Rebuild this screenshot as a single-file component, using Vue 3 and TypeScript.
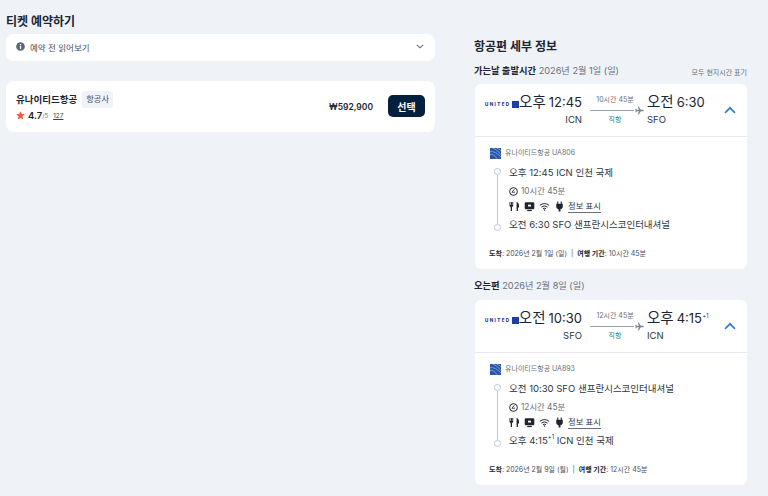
<script setup lang="ts">
interface Leg {
  head: string; date: string; dep: string; depTime: string; arr: string; arrTime: string; plus: boolean;
  from: string; to: string; dur: string; flight: string; depLine: string; arrLine: string; arrive: string;
}
const legs: Leg[] = [
  { head: '가는날 출발시간', date: '2026년 2월 1일 (일)', dep: '오후', depTime: '12:45', arr: '오전', arrTime: '6:30', plus: false,
    from: 'ICN', to: 'SFO', dur: '10시간 45분', flight: 'UA806', depLine: '오후 12:45 ICN 인천 국제', arrLine: '오전 6:30 SFO 샌프란시스코인터내셔널', arrive: '2026년 2월 1일 (일)' },
  { head: '오는편', date: '2026년 2월 8일 (일)', dep: '오전', depTime: '10:30', arr: '오후', arrTime: '4:15', plus: true,
    from: 'SFO', to: 'ICN', dur: '12시간 45분', flight: 'UA893', depLine: '오전 10:30 SFO 샌프란시스코인터내셔널', arrLine: '오후 4:15', arrive: '2026년 2월 9일 (월)' },
]
</script>

<template>
  <div class="page">
    <section class="left">
      <h1 class="title">티켓 예약하기</h1>
      <div class="notice">
        <svg class="info" viewBox="0 0 10 10"><circle cx="5" cy="5" r="4.8" fill="#5f6672"/><rect x="4.3" y="4.3" width="1.4" height="3.4" fill="#fff"/><rect x="4.3" y="2.3" width="1.4" height="1.3" fill="#fff"/></svg>
        <span class="notice-text">예약 전 읽어보기</span>
        <svg class="chev" viewBox="0 0 10 6"><path d="M1 1l4 3.6L9 1" fill="none" stroke="#5f6672" stroke-width="1.3"/></svg>
      </div>
      <div class="offer">
        <div class="offer-info">
          <div class="offer-name"><strong>유나이티드항공</strong><span class="tag">항공사</span></div>
          <div class="rating">
            <svg class="star" viewBox="0 0 10 10"><path d="M5 .3l1.450 3 3.300.4-2.450 2.250.65 3.300L5 7.650 2.050 9.250l.65-3.300L.25 3.700l3.300-.4z" fill="#f4583f"/></svg>
            <b>4.7</b><span class="of">/5</span><u>127</u>
          </div>
        </div>
        <span class="price">₩592,900</span>
        <button class="select">선택</button>
      </div>
    </section>

    <section class="right">
      <h2 class="title details">항공편 세부 정보</h2>
      <template v-for="(leg, i) in legs" :key="leg.flight">
        <div class="leg-head">
          <span class="leg-title"><b>{{ leg.head }}</b> {{ leg.date }}</span>
          <span v-if="i === 0" class="local">모두 현지시간 표기</span>
        </div>
        <article class="card">
          <header class="card-top">
            <div class="logo"><span class="logo-word">UNITED</span><span class="logo-box"></span></div>
            <div class="end dep">
              <div class="time"><span class="ampm">{{ leg.dep }}</span><span>{{ leg.depTime }}</span></div>
              <div class="code">{{ leg.from }}</div>
            </div>
            <div class="route">
              <span class="dur">{{ leg.dur }}</span>
              <div class="line"><i></i>
                <svg class="plane" viewBox="0 0 10 10"><path d="M9.800 5c0-.5-.6-.8-1.200-.8H6.500L4.300.6H3.200l1.100 3.600H2.100L1.200 3H.3l.5 2-.5 2h.9l.9-1.200h2.200L3.200 9.400h1.100l2.200-3.600h2.100c.6 0 1.200-.3 1.200-.8z" fill="#7d8794"/></svg>
              </div>
              <span class="direct">직항</span>
            </div>
            <div class="end arr">
              <div class="time"><span class="ampm">{{ leg.arr }}</span><span>{{ leg.arrTime }}<sup v-if="leg.plus">+1</sup></span></div>
              <div class="code">{{ leg.to }}</div>
            </div>
            <svg class="up" viewBox="0 0 12 8"><path d="M1 6.800l5-5 5 5" fill="none" stroke="#2f80e6" stroke-width="1.700"/></svg>
          </header>
          <div class="card-body">
            <div class="carrier">
              <svg class="globe" viewBox="0 0 12 12"><rect width="12" height="12" fill="#2c56a8"/><path d="M0 4q6-1 12 6M0 7q4-1 8 5M3 0q5 2 9 7M7 0q3 1 5 3" fill="none" stroke="#a9c0e6" stroke-width=".7"/></svg>
              <span>유나이티드항공 {{ leg.flight }}</span>
            </div>
            <div class="stops">
              <div class="rail"><i></i><em></em><i></i></div>
              <div class="stop-text">
                <div class="stop">{{ leg.depLine }}</div>
                <div class="elapsed">
                  <svg class="clock" viewBox="0 0 10 10"><circle cx="5" cy="5" r="4.200" fill="none" stroke="#3c434e" stroke-width="1.200"/><path d="M5.800 2.600 3.300 5.800h3.300" fill="none" stroke="#3c434e" stroke-width="1.100"/></svg>
                  {{ leg.dur }}
                </div>
                <div class="amenities">
                  <svg viewBox="0 0 11 11"><path d="M.5 1v3.600c0 .8.5 1.300 1.200 1.500V10h1.300V6.100c.7-.2 1.200-.7 1.200-1.500V1h-.9v3H3V1h-.9v3h-.7V1zM7.600 1C9.200 1.300 10 2.800 10 4.800v1.700H9V10H7.600z" fill="#1e2530"/></svg>
                  <svg viewBox="0 0 11 11"><rect x=".7" y="1.300" width="9.600" height="7" rx="1.200" fill="#1e2530"/><rect x="4" y="3.700" width="3" height="1.800" fill="#fff"/><rect x="3.200" y="8.900" width="4.600" height="1.200" fill="#1e2530"/></svg>
                  <svg viewBox="0 0 11 11"><path d="M.8 4.300q4.700-3.400 9.400 0M2.500 6q3-2.100 6 0M4.100 7.600q1.400-.9 2.800 0" fill="none" stroke="#1e2530" stroke-width="1"/><circle cx="5.500" cy="9" r=".8" fill="#1e2530"/></svg>
                  <svg viewBox="0 0 11 11"><path d="M3.200.5h1.100v2.300h2.400V.5h1.100v2.300h1v2.700c0 1.500-1 2.500-2.400 2.700v2.300H4.600V8.200C3.200 8 2.200 7 2.200 5.500V2.800h1z" fill="#1e2530"/></svg>
                  <span class="more">정보 표시</span>
                </div>
                <div class="stop">{{ leg.arrLine }}<template v-if="leg.plus"><sup>+1</sup> ICN 인천 국제</template></div>
              </div>
            </div>
            <div class="summary"><b>도착</b>: {{ leg.arrive }} &nbsp;|&nbsp; <b>여행 기간</b>: {{ leg.dur }}</div>
          </div>
        </article>
      </template>
    </section>
  </div>
</template>

<style>
html, body { margin: 0; background: #eff2f7; }
</style>

<style scoped>
.page {
  width: 768px; height: 496px; box-sizing: border-box; overflow: hidden;
  display: flex; align-items: flex-start; padding: 0 21px 0 6px;
  background: #eff2f7; color: #1e2530;
  font-family: Inter, "Noto Sans CJK KR", sans-serif;
}
.left { width: 429px; margin-right: 40px; padding-top: 14px; }
.right { flex: 1; padding-top: 39px; }
.title { margin: 0; font-size: 12px; line-height: 16px; font-weight: 700; color: #1e2530; }
.details { margin-left: -1px; }
.notice {
  margin-top: 4px; height: 27px; background: #fff; border-radius: 7px;
  display: flex; align-items: center; padding: 0 10px 2px; box-sizing: border-box;
}
.info { width: 9px; height: 9px; margin-right: 5px; }
.notice-text { font-size: 8.500px; color: #49505b; }
.chev { width: 8px; height: 5px; margin-left: auto; margin-right: 1px; }
.offer {
  margin-top: 20px; height: 51px; box-sizing: border-box; background: #fff; border-radius: 8px;
  display: flex; align-items: center; padding: 0 10px;
}
.offer-info { flex: 1; }
.offer-name { display: flex; align-items: center; gap: 5px; font-size: 9.500px; line-height: 17px; }
.offer-name strong { font-weight: 600; }
.tag { background: #eff2f7; border-radius: 3px; padding: 0 4px; font-size: 8.300px; color: #49505b; }
.rating { display: flex; align-items: center; font-size: 9.500px; line-height: 14px; margin-top: 1px; }
.star { width: 9px; height: 9px; margin-right: 3px; }
.rating b { font-weight: 600; }
.of { font-size: 6px; color: #6a717c; margin-right: 5px; }
.rating u { font-size: 6.500px; color: #3c434e; }
.price { font-size: 8.500px; font-weight: 600; margin-right: 15px; }
.select {
  width: 37px; height: 22px; border: 0; border-radius: 5px; background: #04203f; color: #fff;
  font: 700 10px Inter, "Noto Sans CJK KR", sans-serif; padding: 0; margin-top: -1px;
}
.leg-head { display: flex; justify-content: space-between; align-items: flex-end; margin-top: 9px; height: 14px; margin-left: -1px; }
.card + .leg-head { margin-top: 10px; }
.leg-title { font-size: 9.200px; line-height: 14px; color: #68707b; }
.leg-title b { font-size: 9.300px; font-weight: 700; color: #1e2530; }
.local { font-size: 7px; color: #68707b; line-height: 10px; }
.card { margin-top: 7px; background: #fff; border-radius: 6px; overflow: hidden; width: 272px; }
.leg-head:first-of-type + .card { margin-top: 6px; }
.card-top {
  height: 53px; box-sizing: border-box; border-bottom: 1px solid #e6e9ef;
  display: flex; align-items: flex-start; position: relative; padding: 7px 0 0 10px;
}
.logo { display: flex; align-items: center; width: 35px; height: 27px; flex: none; }
.logo-word { font-size: 4.500px; font-weight: 800; letter-spacing: 1.400px; color: #1f3a8f; line-height: 6px; width: 27px; }
.logo-box { width: 7px; height: 7px; background: #1f3f9c; }
.end { width: 62px; flex: none; }
.time { display: flex; align-items: baseline; gap: 3px; font-size: 13px; line-height: 22px; color: #1e2530; white-space: nowrap; }
.dep .time { justify-content: flex-end; }
.dep .code { text-align: right; }
.ampm { font-size: 14.500px; }
.time sup { font-size: 5.500px; line-height: 0; vertical-align: 5px; margin-left: .5px; }
.stop sup { font-size: 6px; line-height: 1; vertical-align: 5px; }
.code { font-size: 9.500px; line-height: 13px; color: #2e3540; }
.route { width: 50px; margin: 3px 7px 0 8px; flex: none; display: flex; flex-direction: column; align-items: center; }
.dur { font-size: 7px; line-height: 12px; color: #68707b; white-space: nowrap; }
.line { display: flex; align-items: center; width: 54px; height: 10px; margin-left: 4px; margin-top: -1px; }
.line i { flex: 1; height: 1px; background: #98a0ab; }
.plane { width: 9px; height: 9px; margin-left: 1px; }
.direct { font-size: 7px; line-height: 13px; color: #29877f; margin-top: -2px; }
.up { position: absolute; right: 11px; top: 22px; width: 12px; height: 8px; }
.card-body { padding: 10px 15px 9px 15px; }
.carrier { display: flex; align-items: center; gap: 4px; font-size: 7px; color: #68707b; line-height: 12px; }
.globe { width: 11px; height: 11px; }
.stops { display: flex; margin-top: 7px; }
.rail { width: 7px; margin: 2px 0 0 4px; display: flex; flex-direction: column; align-items: center; height: 63px; flex: none; }
.rail i { width: 7px; height: 7px; box-sizing: border-box; border: 1.300px solid #c0c8d6; border-radius: 50%; flex: none; }
.rail em { width: 1.500px; flex: 1; background: #c0c8d6; }
.stop-text { margin-left: 8px; }
.stop { font-size: 9.500px; line-height: 14px; color: #2e3540; white-space: nowrap; }
.elapsed { display: flex; align-items: center; gap: 3px; font-size: 8.300px; line-height: 12px; color: #68707b; margin-top: 5px; }
.clock { width: 9px; height: 9px; }
.amenities { display: flex; align-items: center; gap: 4px; margin: 2px 0 5px; height: 14px; }
.amenities svg { width: 11px; height: 11px; }
.more { font-size: 8.300px; line-height: 12px; border-bottom: 1px solid #6a717c; color: #2e3540; margin-left: -1px; }
.summary { margin-top: 16px; margin-left: -1px; font-size: 7px; line-height: 12px; color: #49505b; white-space: nowrap; }
.summary b { font-weight: 700; color: #1e2530; }
</style>
